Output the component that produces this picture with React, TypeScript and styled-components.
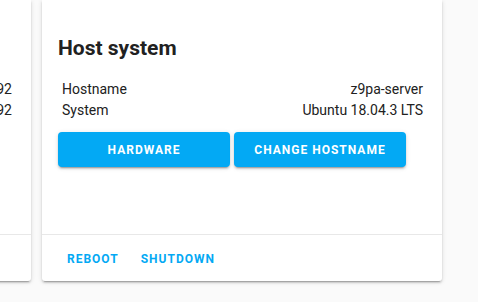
import styled, { createGlobalStyle } from "styled-components";

const GlobalStyle = createGlobalStyle`
  html, body {
    margin: 0;
    padding: 0;
    background: #fafafa;
    font-family: Roboto, "Liberation Sans", sans-serif;
    color: #212121;
    -webkit-font-smoothing: antialiased;
  }
`;

const cardShadow = `0 2px 2px 0 rgba(0, 0, 0, 0.14), 0 1px 5px 0 rgba(0, 0, 0, 0.12), 0 3px 1px -2px rgba(0, 0, 0, 0.2)`;

const Page = styled.div`
  width: 478px;
  height: 302px;
  overflow: hidden;
`;

const CardRow = styled.div`
  display: flex;
  gap: 11px;
  margin-left: -369px;
`;

const Card = styled.div`
  width: 400px;
  height: 281px;
  flex-shrink: 0;
  background: #fff;
  border-radius: 0 0 3px 3px;
  box-shadow: ${cardShadow};
  display: flex;
  flex-direction: column;
`;

const CardContent = styled.div`
  flex: 1;
  padding: 32px 16px 0 16px;
`;

const Title = styled.h1`
  margin: 0 0 15px 0;
  font-size: 21px;
  line-height: 32px;
  font-weight: 700;
  color: #212121;
`;

const InfoTable = styled.div`
  display: flex;
  flex-direction: column;
  padding: 0 3px 0 4px;
`;

const InfoRow = styled.div`
  display: flex;
  justify-content: space-between;
  font-size: 14px;
  line-height: 21px;
`;

const ButtonRow = styled.div`
  display: flex;
  gap: 4px;
  margin-top: 11px;
`;

const RaisedButton = styled.button`
  width: 172px;
  height: 35px;
  border: none;
  border-radius: 4px;
  background: #03a9f4;
  color: #fff;
  font-family: Roboto, "Liberation Sans", sans-serif;
  font-size: 12px;
  font-weight: 700;
  letter-spacing: 1px;
  text-transform: uppercase;
  box-shadow: 0 3px 1px -2px rgba(0, 0, 0, 0.2), 0 2px 2px 0 rgba(0, 0, 0, 0.14),
    0 1px 5px 0 rgba(0, 0, 0, 0.12);
  cursor: pointer;
`;

const CardActions = styled.div`
  height: 46px;
  border-top: 1px solid #e8e8e8;
  display: flex;
  align-items: center;
  gap: 22px;
  padding: 1px 0 0 25px;
  box-sizing: border-box;
  height: 47px;
`;

const TextButton = styled.button`
  border: none;
  background: none;
  padding: 0;
  color: #03a9f4;
  font-family: Roboto, "Liberation Sans", sans-serif;
  font-size: 12px;
  font-weight: 700;
  letter-spacing: 1px;
  text-transform: uppercase;
  cursor: pointer;
`;

const hostInfo = [
  { label: "Hostname", value: "z9pa-server" },
  { label: "System", value: "Ubuntu 18.04.3 LTS" },
];

export default function App() {
  return (
    <Page>
      <GlobalStyle />
      <CardRow>
        <Card>
          <CardContent>
            <Title>Home Assistant</Title>
            <InfoTable>
              <InfoRow>
                <span>IP address</span>
                <span>192.168.1.192</span>
              </InfoRow>
              <InfoRow>
                <span>Gateway</span>
                <span>192.168.1.192</span>
              </InfoRow>
            </InfoTable>
          </CardContent>
          <CardActions />
        </Card>
        <Card>
          <CardContent>
            <Title>Host system</Title>
            <InfoTable>
              {hostInfo.map((row) => (
                <InfoRow key={row.label}>
                  <span>{row.label}</span>
                  <span>{row.value}</span>
                </InfoRow>
              ))}
            </InfoTable>
            <ButtonRow>
              <RaisedButton>Hardware</RaisedButton>
              <RaisedButton>Change hostname</RaisedButton>
            </ButtonRow>
          </CardContent>
          <CardActions>
            <TextButton>Reboot</TextButton>
            <TextButton>Shutdown</TextButton>
          </CardActions>
        </Card>
      </CardRow>
    </Page>
  );
}
